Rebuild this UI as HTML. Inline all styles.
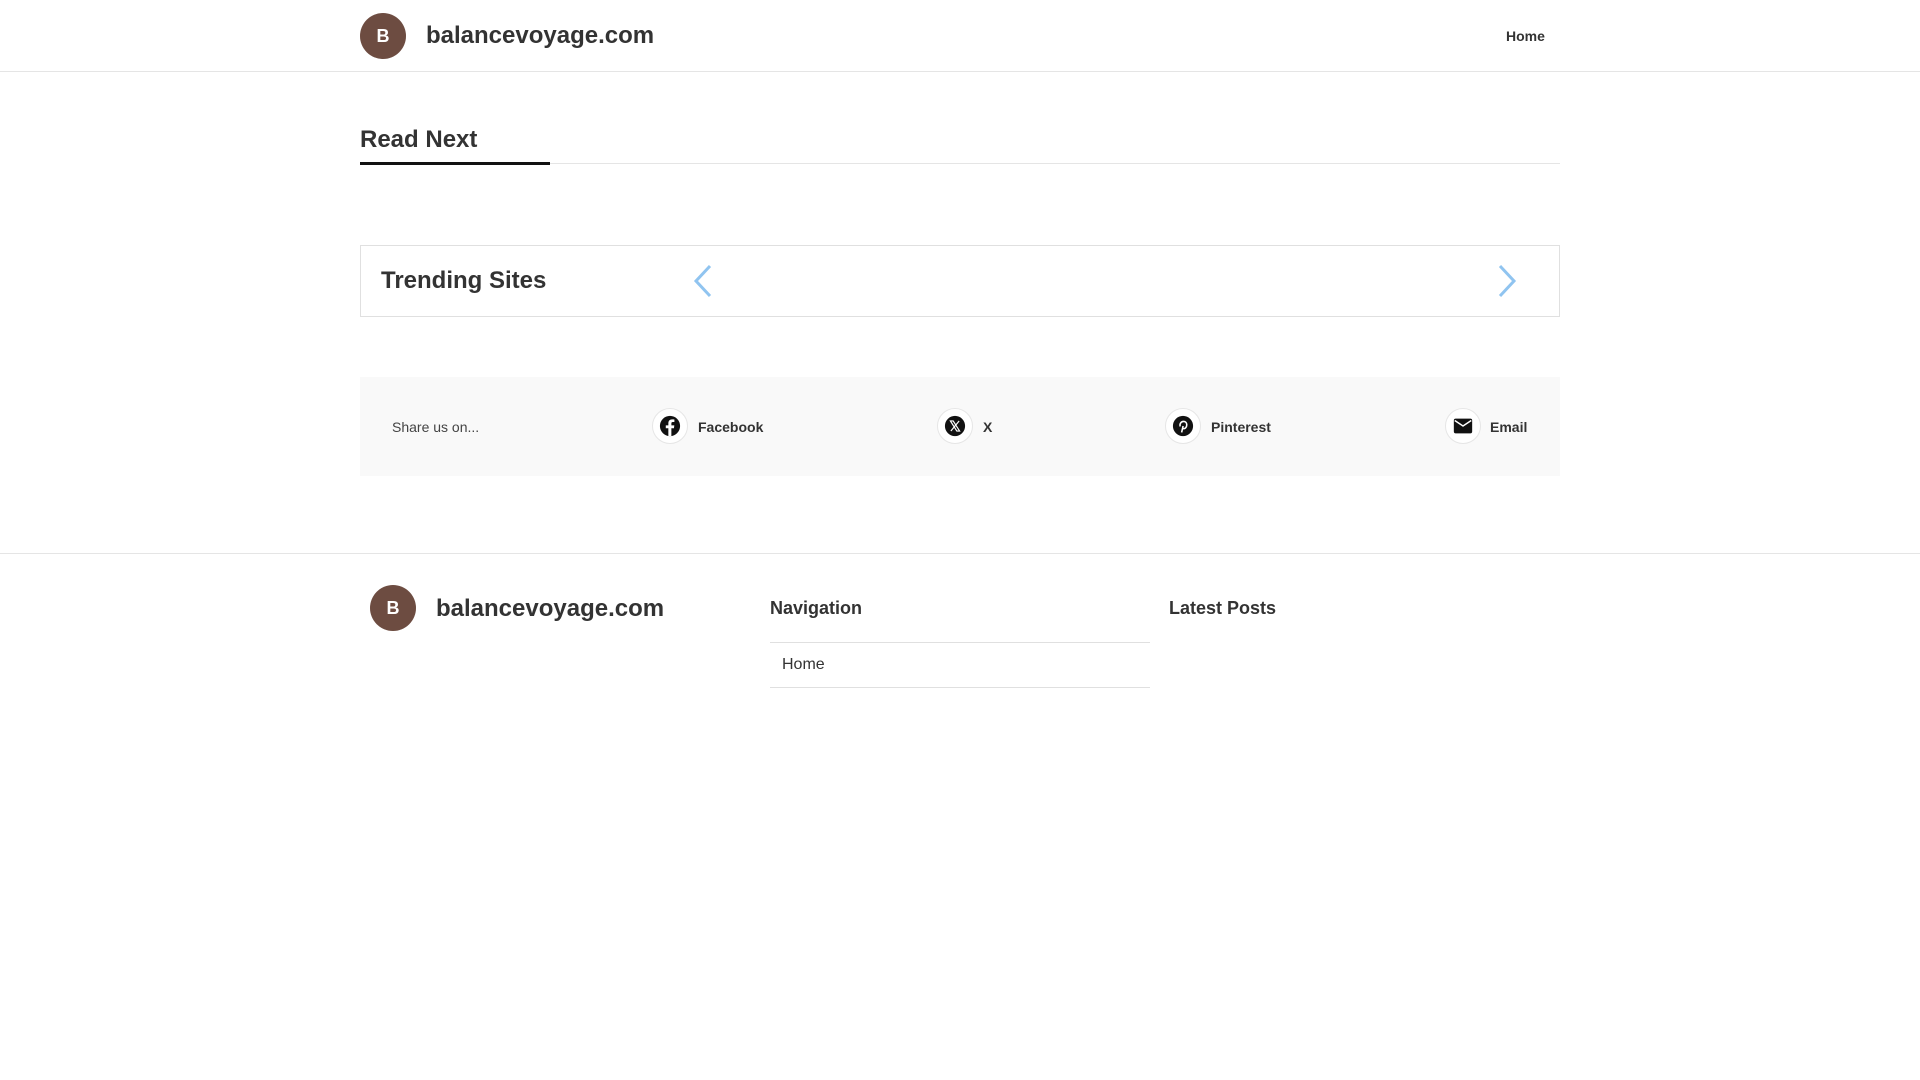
<!DOCTYPE html>
<html><head><meta charset="utf-8"><style>
*{margin:0;padding:0;box-sizing:border-box}
body{width:1920px;height:1080px;background:#fff;font-family:"Liberation Sans",sans-serif;color:#333;position:relative;overflow:hidden}
.a{position:absolute}
.logo{width:46px;height:46px;border-radius:50%;background:#6d4c41;color:#fff;font-weight:bold;font-size:18px;display:flex;align-items:center;justify-content:center}
.ic{width:36px;height:36px;border-radius:50%;background:#fff;border:1px solid #e6e6e6;display:flex;align-items:center;justify-content:center}
.sh{font-size:14px;font-weight:bold;color:#333}
</style></head><body>
<div class="a" style="left:0;top:71px;width:1920px;height:1px;background:#e5e5e5"></div>
<div class="a logo" style="left:360px;top:13px">B</div>
<div class="a" style="left:426px;top:22px;font-size:24px;font-weight:bold">balancevoyage.com</div>
<div class="a" style="left:1506px;top:28px;font-size:14px;font-weight:bold">Home</div>

<div class="a" style="left:360px;top:126px;font-size:24px;font-weight:bold">Read Next</div>
<div class="a" style="left:360px;top:163px;width:1200px;height:1px;background:#e5e5e5"></div>
<div class="a" style="left:360px;top:162px;width:190px;height:3px;background:#111"></div>

<div class="a" style="left:360px;top:245px;width:1200px;height:72px;border:1px solid #e0e0e0"></div>
<div class="a" style="left:381px;top:267px;font-size:24px;font-weight:bold">Trending Sites</div>
<svg class="a" style="left:690px;top:263px" width="24" height="36"><path d="M20 3 L6 18 L20 33" stroke="#90c4f0" stroke-width="3" fill="none"/></svg>
<svg class="a" style="left:1496px;top:263px" width="24" height="36"><path d="M4 3 L18 18 L4 33" stroke="#90c4f0" stroke-width="3" fill="none"/></svg>

<div class="a" style="left:360px;top:377px;width:1200px;height:99px;background:#f9f9f9"></div>
<div class="a" style="left:392px;top:419px;font-size:14px;color:#444">Share us on...</div>
<div class="a ic" style="left:652px;top:408px"><svg width="22" height="22" viewBox="0 0 24 24"><circle cx="12" cy="12" r="11" fill="#111"/><path d="M13.5 23V14.5h2.8l.4-3.2h-3.2V9.3c0-.9.3-1.6 1.6-1.6h1.7V4.9c-.3 0-1.3-.1-2.5-.1-2.5 0-4.1 1.5-4.1 4.2v2.3H7.4v3.2h2.8V23z" fill="#fff"/></svg></div>
<div class="a sh" style="left:698px;top:419px">Facebook</div>
<div class="a ic" style="left:937px;top:408px"><svg width="22" height="22" viewBox="0 0 24 24"><circle cx="12" cy="12" r="11" fill="#111"/><path d="M7 6.5h3l7 11h-3z M16.5 6.5L7.5 17.5" stroke="#fff" stroke-width="1.3" fill="none"/></svg></div>
<div class="a sh" style="left:983px;top:419px">X</div>
<div class="a ic" style="left:1165px;top:408px"><svg width="22" height="22" viewBox="0 0 24 24"><circle cx="12" cy="12" r="11" fill="#111"/><path d="M10.5 19l1.6-7M9 12.5c-1-2.5.8-5.5 3.5-5.5 2.3 0 3.6 1.6 3.6 3.5 0 2.4-1.3 4.4-3 4.4-1 0-1.6-.8-1.3-1.7" stroke="#fff" stroke-width="1.7" fill="none"/></svg></div>
<div class="a sh" style="left:1211px;top:419px">Pinterest</div>
<div class="a ic" style="left:1445px;top:408px"><svg width="22" height="22" viewBox="0 0 24 24"><rect x="2" y="4" width="20" height="16" rx="2" fill="#111"/><path d="M3 6l9 6 9-6" stroke="#fff" stroke-width="1.6" fill="none"/></svg></div>
<div class="a sh" style="left:1490px;top:419px">Email</div>

<div class="a" style="left:0;top:553px;width:1920px;height:1px;background:#e5e5e5"></div>
<div class="a logo" style="left:370px;top:585px">B</div>
<div class="a" style="left:436px;top:595px;font-size:24px;font-weight:bold">balancevoyage.com</div>
<div class="a" style="left:770px;top:598px;font-size:18px;font-weight:bold">Navigation</div>
<div class="a" style="left:770px;top:642px;width:380px;height:1px;background:#e0e0e0"></div>
<div class="a" style="left:782px;top:656px;font-size:16px">Home</div>
<div class="a" style="left:770px;top:687px;width:380px;height:1px;background:#e0e0e0"></div>
<div class="a" style="left:1169px;top:598px;font-size:18px;font-weight:bold">Latest Posts</div>
</body></html>
